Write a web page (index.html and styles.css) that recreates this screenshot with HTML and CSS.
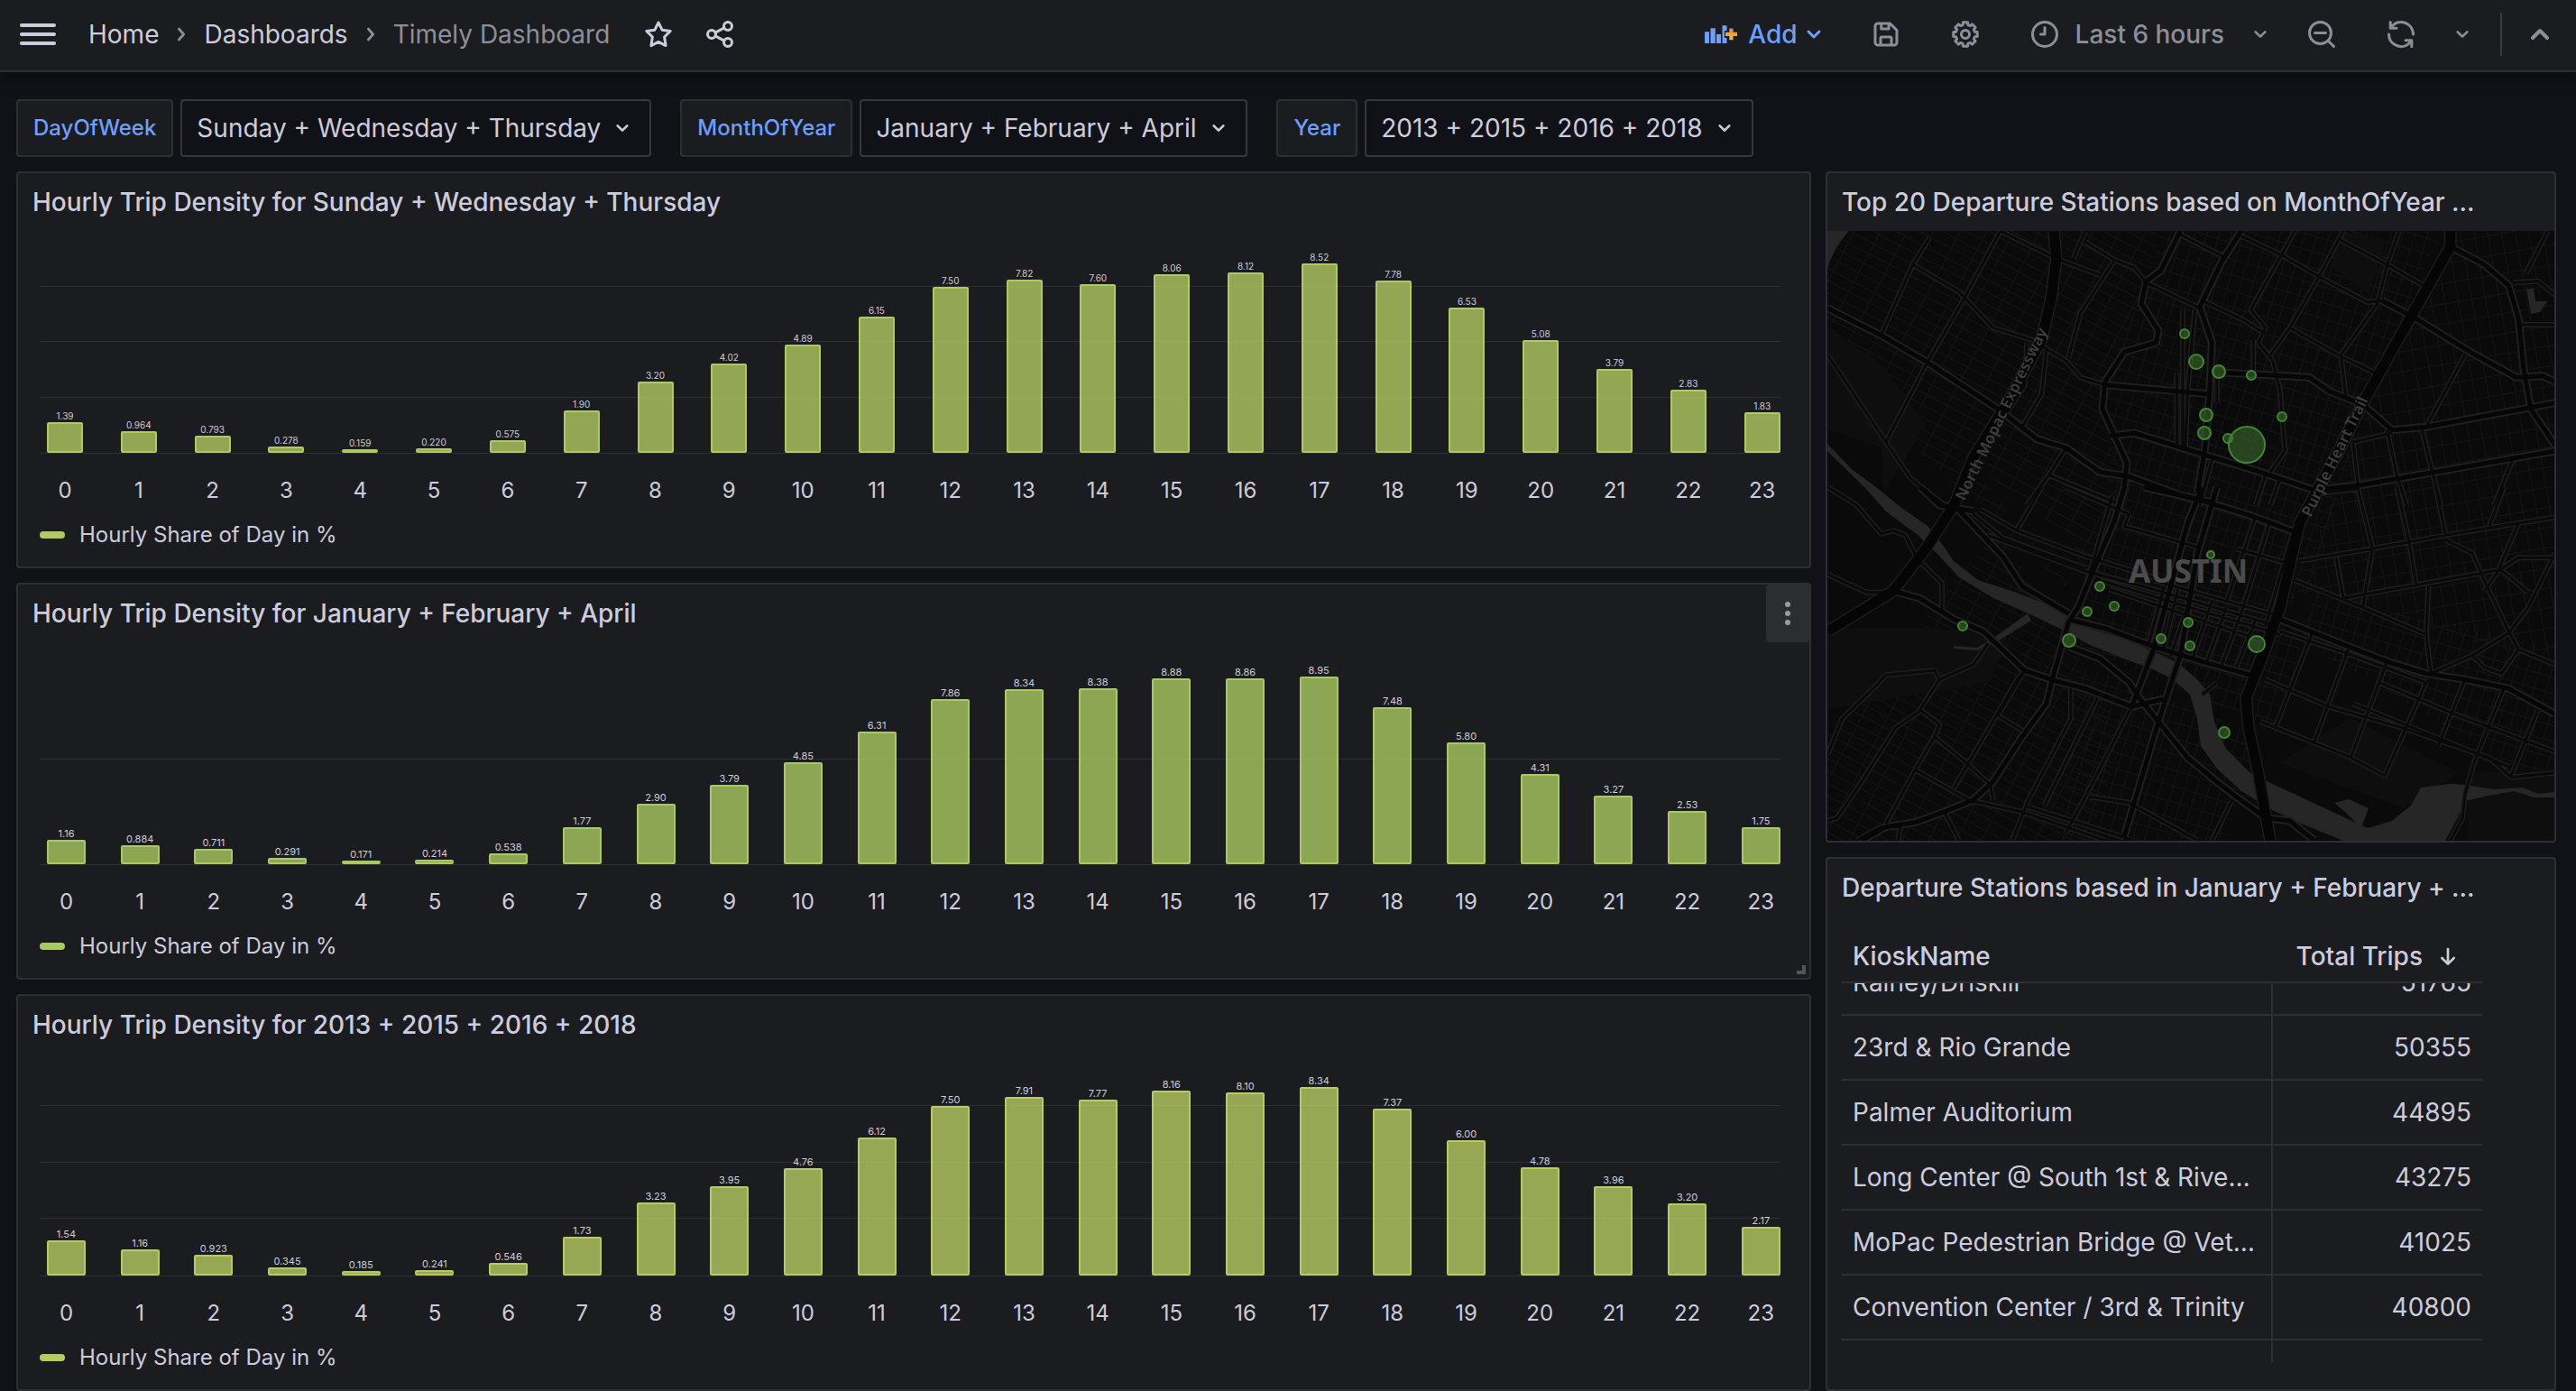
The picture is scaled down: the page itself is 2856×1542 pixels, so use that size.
FILE: index.html
```html
<!DOCTYPE html>
<html lang="en">
<head>
<meta charset="utf-8">
<title>Timely Dashboard</title>
<link rel="stylesheet" href="styles.css">
</head>
<body>
<svg class="sprite" aria-hidden="true">
  <symbol id="i-down" viewBox="0 0 24 24"><path d="M8 10l4 4 4-4"/></symbol>
  <symbol id="i-up" viewBox="0 0 24 24"><path d="M8 14l4-4 4 4"/></symbol>
  <symbol id="i-right" viewBox="0 0 24 24"><path d="M10 7.500l4 4.500-4 4.500"/></symbol>
</svg>

<header class="topbar">
  <button class="menu-btn" type="button" aria-label="Menu"><i></i><i></i><i></i></button>
  <nav class="crumbs" aria-label="Breadcrumbs">
    <a href="#">Home</a>
    <svg class="icon icon-sm"><use href="#i-right"/></svg>
    <a href="#">Dashboards</a>
    <svg class="icon icon-sm"><use href="#i-right"/></svg>
    <span>Timely Dashboard</span>
  </nav>
  <button class="mark-btn" type="button" aria-label="Mark as favorite">
    <svg class="icon" viewBox="0 0 24 24"><path d="M12 3.300l2.700 5.500 6.100.9-4.400 4.300 1 6.400L12 17.600l-5.400 2.800 1-6.400-4.400-4.300 6.100-.9z"/></svg>
  </button>
  <button class="mark-btn" type="button" aria-label="Share dashboard">
    <svg class="icon" viewBox="0 0 24 24"><circle cx="18" cy="6" r="3"/><circle cx="6" cy="12" r="3"/><circle cx="18" cy="18" r="3"/><path d="M8.700 10.700l6.600-3.400M8.700 13.300l6.600 3.400"/></svg>
  </button>

  <div class="tools">
    <button class="tool add" type="button">
      <svg class="add-icon" viewBox="0 0 36 36">
        <defs><linearGradient id="plus" x1="0" y1="0" x2="0" y2="1"><stop offset="0" stop-color="#e8823f"/><stop offset="1" stop-color="#edc53d"/></linearGradient></defs>
        <path fill="#6e9fff" d="M0 15.300h5V28H0zM6.500 11.300h5.300V28H6.500zM13 18h5v10h-5zM19.500 8.300h5V14H22v8h2.500v6h-5z"/>
        <path fill="url(#plus)" d="M27.300 11.500h4.200v4.200H36v4.200h-4.500v4.400h-4.200v-4.400H23v-4.200h4.300z"/>
      </svg>
      <span>Add</span>
      <svg class="icon"><use href="#i-down"/></svg>
    </button>
    <button class="tool" type="button" aria-label="Save dashboard">
      <svg class="icon" viewBox="0 0 24 24"><path d="M6 4h9l5 5v9a2 2 0 0 1-2 2H6a2 2 0 0 1-2-2V6a2 2 0 0 1 2-2zM8.500 4v4H14V4M8 20v-5a1 1 0 0 1 1-1h6a1 1 0 0 1 1 1v5"/></svg>
    </button>
    <button class="tool" type="button" aria-label="Dashboard settings">
      <svg class="icon" viewBox="0 0 24 24"><circle cx="12" cy="12" r="3"/><path d="M18.950 10.140L20.830 10.280V13.720L18.950 13.860 18.240 15.600 19.460 17.030 17.030 19.460 15.600 18.240 13.860 18.950 13.720 20.830H10.280L10.140 18.950 8.400 18.240 6.970 19.460 4.540 17.030 5.760 15.600 5.050 13.860 3.170 13.720V10.280L5.050 10.140 5.760 8.400 4.540 6.970 6.970 4.540 8.400 5.760 10.140 5.050 10.280 3.170H13.720L13.860 5.050 15.600 5.760 17.030 4.540 19.460 6.970 18.240 8.400z"/></svg>
    </button>
    <button class="tool time" type="button">
      <svg class="icon" viewBox="0 0 24 24"><circle cx="12" cy="12" r="9"/><path d="M12 7v5H9"/></svg>
      <span>Last 6 hours</span>
      <svg class="icon icon-sm"><use href="#i-down"/></svg>
    </button>
    <button class="tool" type="button" aria-label="Zoom out time range">
      <svg class="icon" viewBox="0 0 24 24"><circle cx="11" cy="11" r="8"/><path d="M7 11h8M17 17l4 4"/></svg>
    </button>
    <button class="tool" type="button" aria-label="Refresh dashboard">
      <svg class="icon solid" viewBox="0 0 24 24"><path d="M19.910 15.510H15.380a1 1 0 0 0 0 2h2.400A8 8 0 0 1 4 12a1 1 0 0 0-2 0 10 10 0 0 0 16.880 7.230V21a1 1 0 0 0 2 0V16.500a1 1 0 0 0-.970-.990zM12 2A10 10 0 0 0 5.120 4.770V3a1 1 0 0 0-2 0V7.500a1 1 0 0 0 1 1h4.500a1 1 0 0 0 0-2H6.220A8 8 0 0 1 20 12a1 1 0 0 0 2 0A10 10 0 0 0 12 2z"/></svg>
    </button>
    <button class="tool interval" type="button" aria-label="Refresh interval"><svg class="icon icon-sm"><use href="#i-down"/></svg></button>
    <span class="divider"></span>
    <button class="tool kiosk" type="button" aria-label="Collapse toolbar"><svg class="icon icon-lg"><use href="#i-up"/></svg></button>
  </div>
</header>

<main>
  <form class="variables">
    <div class="variable">
      <label for="var-day">DayOfWeek</label>
      <span class="picker"><select id="var-day"><option>Sunday + Wednesday + Thursday</option></select><svg class="icon icon-sm"><use href="#i-down"/></svg></span>
    </div>
    <div class="variable">
      <label for="var-month">MonthOfYear</label>
      <span class="picker"><select id="var-month"><option>January + February + April</option></select><svg class="icon icon-sm"><use href="#i-down"/></svg></span>
    </div>
    <div class="variable">
      <label for="var-year">Year</label>
      <span class="picker"><select id="var-year"><option>2013 + 2015 + 2016 + 2018</option></select><svg class="icon icon-sm"><use href="#i-down"/></svg></span>
    </div>
  </form>

  <div class="dashboard">
    <div class="column">
      <section class="panel chart-panel by-day">
        <h2>Hourly Trip Density for Sunday + Wednesday + Thursday</h2>
        <div class="chart" data-max="10" data-step="2.5" data-values="1.39 0.964 0.793 0.278 0.159 0.220 0.575 1.90 3.20 4.02 4.89 6.15 7.50 7.82 7.60 8.06 8.12 8.52 7.78 6.53 5.08 3.79 2.83 1.83"></div>
        <p class="legend"><i></i>Hourly Share of Day in %</p>
      </section>
      <section class="panel chart-panel by-month">
        <h2>Hourly Trip Density for January + February + April</h2>
        <div class="chart" data-max="10.58" data-step="5" data-values="1.16 0.884 0.711 0.291 0.171 0.214 0.538 1.77 2.90 3.79 4.85 6.31 7.86 8.34 8.38 8.88 8.86 8.95 7.48 5.80 4.31 3.27 2.53 1.75"></div>
        <p class="legend"><i></i>Hourly Share of Day in %</p>
        <button class="panel-menu" type="button" aria-label="Panel menu"><i></i><i></i><i></i></button>
        <span class="resize"></span>
      </section>
      <section class="panel chart-panel by-year">
        <h2>Hourly Trip Density for 2013 + 2015 + 2016 + 2018</h2>
        <div class="chart" data-max="9.81" data-step="2.5" data-values="1.54 1.16 0.923 0.345 0.185 0.241 0.546 1.73 3.23 3.95 4.76 6.12 7.50 7.91 7.77 8.16 8.10 8.34 7.37 6.00 4.78 3.96 3.20 2.17"></div>
        <p class="legend"><i></i>Hourly Share of Day in %</p>
      </section>
    </div>

    <div class="column">
      <section class="panel map-panel">
        <h2>Top 20 Departure Stations based on MonthOfYear …</h2>
        <svg class="map" viewBox="0 0 806 676" preserveAspectRatio="xMidYMid slice" role="img" aria-label="Map of Austin">
          <defs>
            <pattern id="grid-west" width="26" height="12" patternUnits="userSpaceOnUse" patternTransform="rotate(28)"><path class="lane" d="M0 0H26M0 0V12"/></pattern>
            <pattern id="grid-core" width="13" height="17" patternUnits="userSpaceOnUse" patternTransform="rotate(17)"><path class="lane" d="M0 0H13M0 0V17"/></pattern>
            <pattern id="grid-east" width="15" height="22" patternUnits="userSpaceOnUse" patternTransform="rotate(-10)"><path class="lane" d="M0 0H15M0 0V22"/></pattern>
            <g id="roads-minor">
              <g transform="translate(-16 -76) scale(.5395 .3333)">
                <path d="M385 228L310 455 235 665 150 930M240 250L205 340 140 575M205 340L300 430 370 550 450 590 520 660 550 715 600 740M385 228L500 320 590 375M560 228L535 320M560 265L620 325 660 350 685 400 795 485M620 325L550 500 525 650M755 240L845 315M990 228L900 490 930 550 915 600 945 660 960 760 970 960 940 1030M880 245L965 310 1040 380 1140 465 1170 460M1090 228L1040 380 980 550 940 640M1080 255L1180 340 1255 410M1205 228L1180 340 1160 470 1085 640 1095 780M980 550L1090 650 1155 700M800 460L880 520 930 570M760 490V960M785 490L770 760 765 960M748 700V940M905 590V700M830 700V800M1340 640L1260 880M1440 400L1490 395 1525 440M1510 228L1465 370M1455 540H1525M1180 890L1200 1040 1220 1140M1250 880L1290 1140M1110 930L1120 1075M1110 930L1190 900M485 1040L520 950M485 1040L440 1140M485 1040L620 1130M30 640L150 930 200 1050 270 1140M820 990L795 1140M930 1040L910 1140M960 1050L940 1140M1400 1140L1440 980M440 600L435 740 400 830M480 620L470 770 430 880"/>
              </g>
              <g transform="translate(-16 284) scale(.5395 .3333)">
                <path d="M470 0L420 140M520 0L650 90M650 90L640 130 790 200M615 30L570 280M345 75L420 145 560 230 700 300M330 90L390 170 560 270M360 160L560 280 700 340 950 460M590 310L960 490M610 340L940 520M700 310L960 430M870 205L990 260M910 95L850 380M940 110L880 420M985 160L930 460M720 340L690 520M750 340L720 540M780 350L735 560M820 380L780 570M850 400L810 580M880 420L840 590M910 440L870 600M930 500L900 620M1040 20L1120 5 1150 205 1130 400M1200 0L1225 180 1240 330M1280 0L1300 160M1420 0L1390 130M1075 235L1090 370 1410 275 1450 235 1525 235M1000 245L1150 205 1300 160 1525 100M990 310L1130 400 1260 490 1270 620M1265 330L1260 490M1270 620L1355 560 1430 485 1470 400 1525 220M1300 175L1355 220 1385 330 1430 480 1450 540 1525 590M1450 120L1410 270 1470 350M1410 275L1380 345M1355 560L1380 600 1415 620 1450 540M930 640L1060 730 1210 800 1390 900 1435 965 1525 950M960 480L1110 560 1260 650M920 780L1100 895 1175 960 1260 650M1025 490L950 800M1100 540L1030 850M1180 580L1105 900M1340 640L1285 860M1490 740L1435 960M1165 650L1310 750 1525 880M1110 720L1430 930M1420 670L1360 910 1340 1020 1335 1100 1310 1175M30 290L110 350 165 350M30 0L90 60 140 155 165 145 190 160 215 240 265 320 265 410 310 460M435 610L380 760 430 810M435 610L420 640M250 610L150 625 130 660 60 770 30 890M250 610L260 640M360 520L330 590 260 640 220 740 260 790 250 830 310 910 365 990 370 1040M220 745L170 800 100 980 50 1100 30 1110M250 830L210 940 150 1120M210 940L330 1050M420 640L290 1000M530 670L530 770 440 1050 410 1175M585 700L475 1060M655 730L560 1030 520 1150M330 1045L430 1080 600 1175M570 1030L650 1050 790 1175M435 1060L640 1165M860 1045L820 1175M270 1080L300 1175M830 650L800 690M90 1175L140 1130 180 1130 175 1175"/>
              </g>
            </g>
            <g id="roads-major">
              <g transform="translate(-16 -76) scale(.5395 .3333)">
                <path d="M755 228L715 360 685 395 675 470 710 560 705 600 640 630 600 730 595 820 620 910 645 1000 640 1080M880 228L840 330 795 480 820 600 815 770 805 960 790 1100M30 485L140 575 235 665 380 820 460 920 520 950 590 1030 650 1045 760 1110 820 1130M600 740L810 770M850 700L1020 715 1060 760 1130 805 1190 890 1260 880 1525 800M610 910L660 900 800 970 920 1030 1030 1090 1120 1075 1525 960M1310 280L1380 340 1430 410 1450 520 1460 680 1475 820 1525 940M1170 460L1240 520 1350 630 1445 715 1500 710 1525 730"/>
              </g>
              <g transform="translate(-16 284) scale(.5395 .3333)">
                <path d="M640 0L620 110 570 300 545 400 525 450 490 650 480 720 430 830 370 980 330 1040 270 1080 210 1115 150 1130 100 1175M680 0L790 40 900 95 1000 155M800 0L770 120 700 540 655 730M830 0L790 220 755 560 710 780 640 1160M525 440L600 470 700 530 800 580 900 625M960 440L1100 530 1180 580 1260 620 1340 640 1430 670 1525 755M290 60L390 230 430 330 525 420M220 0L260 60 330 80M165 345L220 370 290 440 350 480 435 610 500 645 560 670 655 730 720 705M525 530L590 570 650 650 670 700 710 780 770 900 830 980 870 1030 930 1100 980 1110 1030 1175"/>
              </g>
            </g>
            <g id="highways">
              <g transform="translate(-16 -76) scale(.5395 .3333)"><path d="M495 228L500 320 490 450 470 590 400 800 330 980 290 1140M1310 228V280L1230 510 1130 800 1080 960 1040 1080"/></g>
              <g transform="translate(-16 284) scale(.5395 .3333)"><path d="M300 20L290 60 230 210 165 345 80 430 30 480M1040 0L1000 120 960 400 920 580 890 700 895 800 915 950 930 1090 940 1175"/></g>
            </g>
          </defs>

          <rect class="land" width="806" height="676"/>
          <path fill="url(#grid-west)" d="M0 0H370L345 90 310 180 320 300 290 420 0 150zM150 250L300 430 270 340zM0 560L190 330 330 560 290 676H0z"/>
          <path fill="url(#grid-core)" d="M370 0H680L610 160 560 320 500 560 260 450 320 300 310 180zM500 440L806 620 806 460 520 400zM280 480L480 560 440 676H260z"/>
          <path fill="url(#grid-east)" d="M690 0H806V480L520 400 600 190z"/>
          <path class="park" d="M0 105L62 150 110 215 62 290 60 240 0 220zM0 440L120 440 200 450 180 500 0 530zM710 600H806V676H710zM500 590L580 540 700 600 640 640zM570 0L620 10 600 70 560 40z"/>
          <path class="water" d="M0 0H24Q6 20 0 42zM0 236L28 265 54 284 81 306 111 327 127 347 140 366 167 387 210 401 243 414 270 429 291 441 329 452 361 466 389 479 410 497 424 514 429 544 442 574 469 601 502 617 545 637 599 662 626 654 647 637 658 617 690 613 707 614 739 619 771 617 788 624 806 622V628H783L761 621 728 627 707 632 699 650 685 676H572L523 656 491 641 459 621 432 596 414 571 410 541 402 514 383 497 361 486 329 474 291 459 264 444 227 426 184 407 146 384 121 357 100 337 65 311 41 284 0 244z"/>
          <path class="water" d="M562 634L578 630 600 640 592 662 576 646zM775 64H783L785 78 798 78 790 90 780 92zM222 424L186 450 166 462 140 460 140 463 166 465 190 454 226 432z"/>
          <use class="minor-edge" href="#roads-minor"/>
          <use class="major-edge" href="#roads-major"/>
          <use class="highway-edge" href="#highways"/>
          <use class="minor-fill" href="#roads-minor"/>
          <use class="major-fill" href="#roads-major"/>
          <use class="highway-fill" href="#highways"/>

          <text class="road-name" transform="translate(152 300) rotate(-64)">North Mopac Expressway</text>
          <text class="road-name" transform="translate(536 318) rotate(-64)">Purple Heart Trail</text>
          <text class="city" x="400" y="390" text-anchor="middle">AUSTIN</text>

          <g class="stations">
            <circle cx="396" cy="114" r="5"/><circle cx="409" cy="145" r="8"/><circle cx="434" cy="156" r="7"/><circle cx="470" cy="160" r="5"/><circle cx="420" cy="204" r="7"/><circle cx="418" cy="224" r="7"/><circle cx="444" cy="230" r="5"/><circle cx="465" cy="237" r="20"/><circle cx="504" cy="206" r="5"/><circle cx="425" cy="359" r="4"/><circle cx="302" cy="394" r="5"/><circle cx="318" cy="416" r="5"/><circle cx="288" cy="422" r="5"/><circle cx="150" cy="438" r="5"/><circle cx="268" cy="454" r="7"/><circle cx="400" cy="434" r="5"/><circle cx="370" cy="452" r="5"/><circle cx="402" cy="460" r="5"/><circle cx="476" cy="458" r="9"/><circle cx="440" cy="556" r="6"/>
          </g>
        </svg>
      </section>

      <section class="panel table-panel">
        <h2>Departure Stations based in January + February + …</h2>
        <table>
          <thead>
            <tr><th scope="col">KioskName</th><th scope="col">Total Trips <svg class="icon sort" viewBox="0 0 24 24"><path d="M12 6v12M7 13.500l5 5 5-5"/></svg></th></tr>
          </thead>
          <tbody>
            <tr><td>Rainey/Driskill</td><td>51765</td></tr>
            <tr><td>23rd &amp; Rio Grande</td><td>50355</td></tr>
            <tr><td>Palmer Auditorium</td><td>44895</td></tr>
            <tr><td>Long Center @ South 1st &amp; Rive…</td><td>43275</td></tr>
            <tr><td>MoPac Pedestrian Bridge @ Vet…</td><td>41025</td></tr>
            <tr><td>Convention Center / 3rd &amp; Trinity</td><td>40800</td></tr>
            <tr><td></td><td></td></tr>
          </tbody>
        </table>
      </section>
    </div>
  </div>
</main>
<script src="charts.js"></script>
</body>
</html>
```
FILE: styles.css
```css
* { box-sizing: border-box; }

body {
  margin: 0;
  background: #111217;
  color: #ccccdc;
  font: 400 28px/44px Inter, "Liberation Sans", sans-serif;
}

h2, p { margin: 0; }
a { color: inherit; text-decoration: none; }
button, select { font: inherit; color: inherit; border: 0; background: none; padding: 0; margin: 0; }
.sprite { position: absolute; width: 0; height: 0; }

.icon {
  display: block;
  flex: none;
  width: 36px;
  height: 36px;
  fill: none;
  stroke: currentColor;
  stroke-width: 2;
  stroke-linecap: round;
  stroke-linejoin: round;
}
.icon-sm { width: 32px; height: 32px; }
.icon-lg { width: 48px; height: 48px; }
.icon.solid { fill: currentColor; stroke: none; }

/* Top bar */
.topbar {
  position: relative;
  display: flex;
  align-items: center;
  height: 80px;
  padding: 0 16px 2px 22px;
  background: #1b1c20;
  border-bottom: 2px solid #2e2f34;
  box-shadow: 0 2px 16px rgba(0, 0, 0, .6);
}
.menu-btn { display: flex; flex-direction: column; gap: 6px; width: 40px; margin-right: 36px; }
.menu-btn i { height: 4px; border-radius: 2px; background: #ccccdc; }
.crumbs { display: flex; align-items: center; gap: 9px; margin-right: 4px; white-space: nowrap; }
.crumbs .icon { color: #8e8e9b; }
.crumbs span { color: #8e8e9b; }
.mark-btn { margin-left: 32px; }

.tools { display: flex; align-items: center; margin-left: auto; color: #8e8e9b; white-space: nowrap; }
.tool { display: flex; align-items: center; padding: 0 26px; }
.tool.add { padding: 0 18px 0 0; color: #6e9fff; font-weight: 500; }
.add-icon { width: 36px; height: 36px; margin-right: 12px; }
.tool.time { padding-right: 8px; gap: 16px; font-weight: 500; }
.tool.time span { margin-right: 8px; }
.tool.interval { padding: 0 8px; }
.tool.kiosk { padding: 0; }
.divider { width: 2px; height: 48px; margin: 0 18px; background: #3a3b41; }

/* Template variables */
main { padding: 30px 22px 0 18px; }
.variables { display: flex; gap: 32px; margin-bottom: 16px; }
.variable { display: flex; gap: 8px; }
.variable label {
  height: 64px;
  padding: 0 17px;
  border: 2px solid #2e2f34;
  border-radius: 4px;
  background: #1b1c20;
  color: #6e9fff;
  font-size: 24px;
  font-weight: 500;
  line-height: 60px;
}
.picker { position: relative; }
.picker select {
  height: 64px;
  padding: 0 54px 0 16px;
  border: 2px solid #37383d;
  border-radius: 4px;
  background: #111217;
  appearance: none;
}
.picker .icon { position: absolute; right: 16px; top: 16px; pointer-events: none; }

/* Panels */
.dashboard { display: grid; grid-template-columns: 1990fr 810fr; gap: 16px; }
.column { display: flex; flex-direction: column; gap: 16px; min-width: 0; }
.panel {
  position: relative;
  overflow: hidden;
  border: 2px solid #2e2f34;
  border-radius: 4px;
  background: #1b1c20;
}
.panel h2 {
  overflow: hidden;
  padding: 0 16px;
  font-size: 28px;
  font-weight: 500;
  line-height: 64px;
  white-space: nowrap;
}

/* Bar charts */
.chart-panel { height: 440px; --bar-width: 43px; --value-size: 11px; }
.by-day { --bar: 177 201 98; --bar-width: 40px; --value-size: 10px; }
.by-month { --bar: 169 201 98; }
.by-year { --bar: 184 203 96; }
.chart { margin: 0 32px 0 24px; }
.plot { position: relative; height: 247px; border-bottom: 1px solid #2e2f34; }
.gridline { position: absolute; left: 0; right: 0; height: 1px; background: #2e2f34; }
.bars, .hours { display: flex; justify-content: space-between; padding-left: 8px; }
.bars { position: relative; height: 100%; align-items: stretch; }
.bar { display: flex; flex-direction: column; justify-content: flex-end; align-items: center; width: var(--bar-width); }
.bar span { font-size: var(--value-size); line-height: 14px; }
.bar i {
  flex: none;
  width: 100%;
  border: 2px solid rgb(var(--bar));
  border-radius: 2px;
  background: rgb(var(--bar) / .8);
}
.hours { padding-top: 27px; }
.hours span { display: flex; justify-content: center; width: var(--bar-width); font-size: 24px; line-height: 28px; }
.legend { display: flex; align-items: center; gap: 16px; margin: 21px 24px 0; font-size: 24px; line-height: 28px; }
.legend i { width: 28px; height: 8px; border-radius: 4px; background: rgb(var(--bar)); }

.panel-menu {
  position: absolute;
  top: 0;
  right: 0;
  display: flex;
  flex-direction: column;
  align-items: center;
  justify-content: center;
  gap: 4px;
  width: 48px;
  height: 64px;
  border-radius: 4px;
  background: #2c2d31;
}
.panel-menu i { width: 6px; height: 6px; border-radius: 50%; background: #9b9ba8; }
.resize {
  position: absolute;
  right: 4px;
  bottom: 4px;
  width: 10px;
  height: 10px;
  border: solid #555558;
  border-width: 0 4px 4px 0;
}

/* Map */
.map-panel { height: 744px; }
.map { display: block; width: 100%; height: 676px; }
.map path { vector-effect: non-scaling-stroke; }
.map use { fill: none; stroke-linejoin: round; }
.land { fill: #0a0a0a; }
.park { fill: #0e0e0e; }
.water { fill: #262626; }
.lane { fill: none; stroke: #141414; stroke-width: 2; }
.minor-edge { stroke: #1e1e1e; stroke-width: 6; }
.minor-fill { stroke: #090909; stroke-width: 3; }
.major-edge { stroke: #1f1f1f; stroke-width: 9; }
.major-fill { stroke: #060606; stroke-width: 5; }
.highway-edge { stroke: #1c1c1c; stroke-width: 14; }
.highway-fill { stroke: #050505; stroke-width: 11; }
.road-name { fill: #3d3d3d; font: 600 17px "Noto Sans", sans-serif; }
.city { fill: #4b4b4b; font: 700 35px "Noto Sans", sans-serif; }
.stations circle { fill: rgb(65 125 48 / .5); stroke: #438534; stroke-width: 2; }

/* Table */
.table-panel { height: 592px; padding-bottom: 30px; }
table { display: block; margin: 0 80px 0 16px; }
thead, tbody { display: block; }
tr { display: grid; grid-template-columns: 478px 1fr; }
th, td { padding: 0 12px; overflow: hidden; white-space: nowrap; }
th { height: 72px; padding-top: 16px; font-weight: 500; line-height: 56px; text-align: left; }
thead tr { border-bottom: 2px solid #2e2f34; }
th:last-child { display: flex; align-items: center; justify-content: flex-end; gap: 12px; }
.sort { width: 32px; height: 32px; margin-right: 10px; }
tbody { height: 420px; overflow: hidden; }
tbody tr { height: 72px; border-bottom: 2px solid #2e2f34; }
tbody tr:first-child { margin-top: -36px; }
td { line-height: 70px; }
td:first-child { border-right: 2px solid #2e2f34; }
td:last-child { text-align: right; }
```
FILE: charts.js
```js
// Builds each hourly bar chart from the values on its container.
document.querySelectorAll(".chart").forEach(function (chart) {
  var max = Number(chart.dataset.max);
  var step = Number(chart.dataset.step);
  var values = chart.dataset.values.split(" ");

  function add(parent, tag, className, text) {
    var el = document.createElement(tag);
    if (className) el.className = className;
    if (text !== undefined) el.textContent = text;
    parent.appendChild(el);
    return el;
  }

  var plot = add(chart, "div", "plot");
  for (var v = step; v < 8.5; v += step) {
    add(plot, "div", "gridline").style.bottom = (v / max * 100) + "%";
  }
  var bars = add(plot, "div", "bars");
  var hours = add(chart, "div", "hours");
  values.forEach(function (value, hour) {
    var bar = add(bars, "div", "bar");
    add(bar, "span", "", value);
    add(bar, "i").style.height = (value / max * 100) + "%";
    add(hours, "span", "", hour);
  });
});
```
